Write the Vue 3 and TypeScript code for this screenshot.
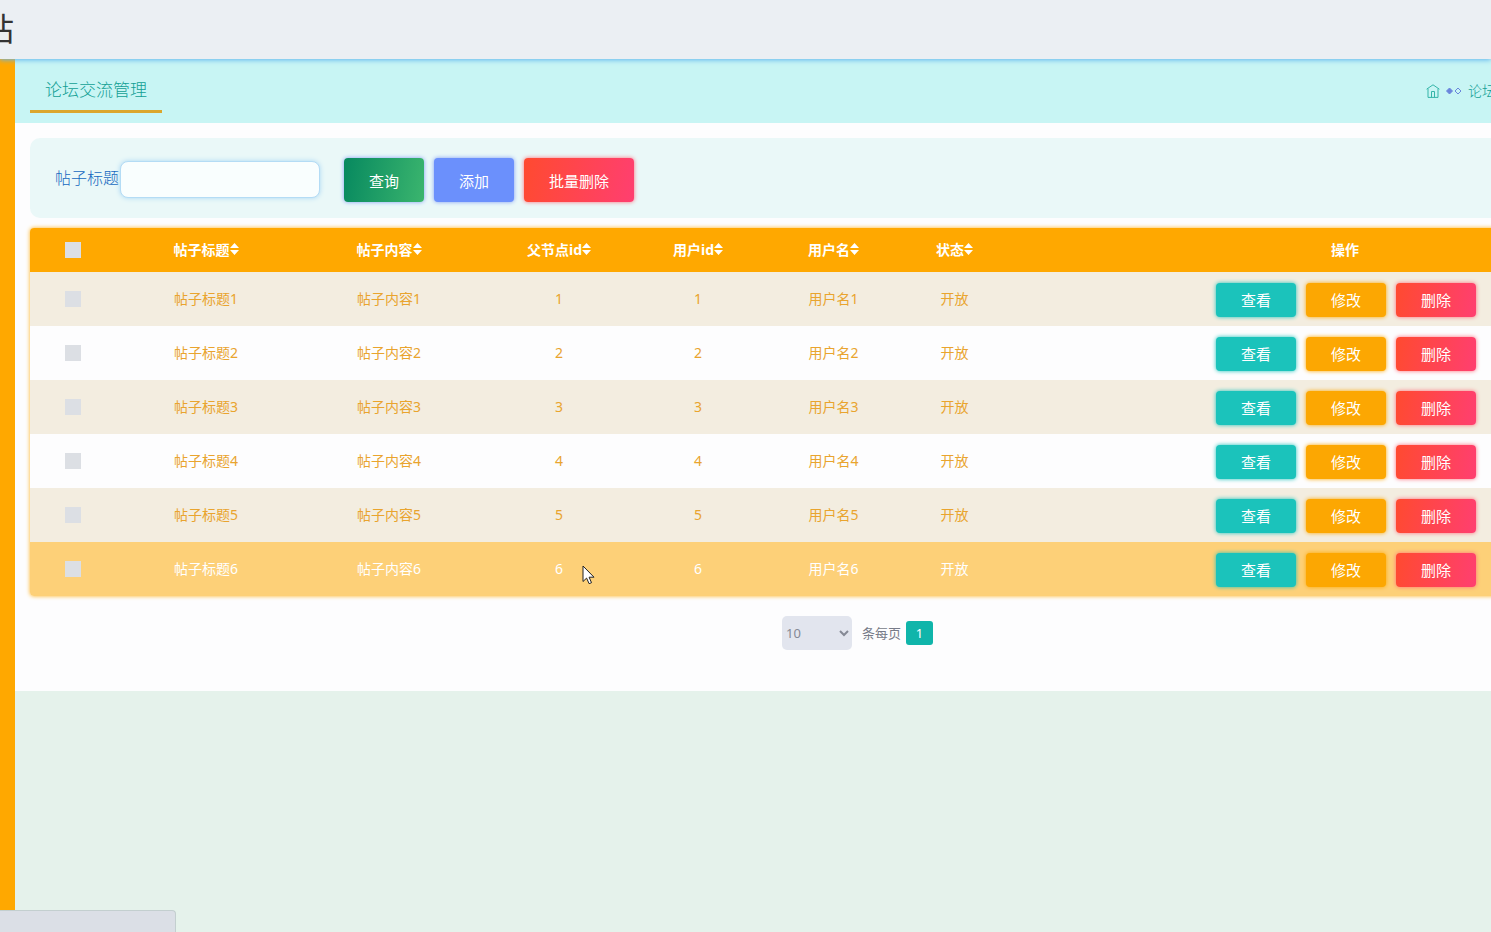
<script setup lang="ts">
import { ref } from 'vue'

interface Post {
  id: number
  title: string
  content: string
  user: string
  state: string
}

const columns: { key: string; label: string }[] = [
  { key: 'title', label: '帖子标题' },
  { key: 'content', label: '帖子内容' },
  { key: 'parent', label: '父节点id' },
  { key: 'uid', label: '用户id' },
  { key: 'user', label: '用户名' },
  { key: 'state', label: '状态' },
]

const posts: Post[] = [1, 2, 3, 4, 5, 6].map((id) => ({
  id,
  title: `帖子标题${id}`,
  content: `帖子内容${id}`,
  user: `用户名${id}`,
  state: '开放',
}))

const keyword = ref('')
const pageSize = ref('10')
const activeId = ref(6)
</script>

<template>
  <div class="shell">
    <header class="topbar"><span class="brand">站</span></header>
    <div class="body">
      <aside class="sidebar"></aside>
      <main class="main">
        <div class="crumbs">
          <h1 class="page-title">论坛交流管理</h1>
          <nav class="trail">
            <a href="#" aria-label="home" class="home">
              <svg width="14" height="14" viewBox="0 0 14 14" fill="none" stroke="currentColor">
                <path d="M.6 5.2 7 .8l6.4 4.4M2 4.6v8.8h10V4.6M5.5 13.4V7.5h3v5.9" />
              </svg>
            </a>
            <svg class="diamonds" width="16" height="8" viewBox="0 0 16 8" stroke="currentColor">
              <path d="M3.5 1 6.5 4 3.5 7 .5 4z" fill="currentColor" />
              <path d="M12 1 15 4 12 7 9 4z" fill="none" />
            </svg>
            <span>论坛</span>
          </nav>
        </div>

        <section class="panel">
          <form class="search" @submit.prevent>
            <label for="keyword">帖子标题</label>
            <input id="keyword" v-model="keyword" type="text" />
            <div class="tools">
              <button type="submit" class="btn query">查询</button>
              <button type="button" class="btn add">添加</button>
              <button type="button" class="btn danger">批量删除</button>
            </div>
          </form>

          <table class="grid">
            <colgroup>
              <col class="c-check" />
              <col v-for="c in columns" :key="c.key" :class="`c-${c.key}`" />
              <col />
            </colgroup>
            <thead>
              <tr>
                <th><input type="checkbox" aria-label="all" /></th>
                <th v-for="c in columns" :key="c.key" class="text">
                  <span class="sortable">{{ c.label }}<svg width="9" height="12" viewBox="0 0 9 12" fill="currentColor"><path d="M4.5 0 9 5H0zM0 7h9l-4.5 5z" /></svg></span>
                </th>
                <th class="text">操作</th>
              </tr>
            </thead>
            <tbody>
              <tr v-for="p in posts" :key="p.id" :class="{ active: p.id === activeId }">
                <td><input type="checkbox" :aria-label="p.title" /></td>
                <td class="text">{{ p.title }}</td>
                <td class="text">{{ p.content }}</td>
                <td class="text">{{ p.id }}</td>
                <td class="text">{{ p.id }}</td>
                <td class="text">{{ p.user }}</td>
                <td class="text">{{ p.state }}</td>
                <td>
                  <div class="actions">
                    <button type="button" class="btn small view">查看</button>
                    <button type="button" class="btn small edit">修改</button>
                    <button type="button" class="btn small danger">删除</button>
                  </div>
                </td>
              </tr>
            </tbody>
          </table>

          <div class="pager">
            <select id="size" v-model="pageSize">
              <option>10</option>
            </select>
            <label for="size">条每页</label>
            <button type="button" class="page">1</button>
          </div>
        </section>
      </main>
    </div>
    <div class="status"></div>
    <svg class="cursor" width="13" height="20" viewBox="0 0 13 20">
      <path d="M1 1v15.5l3.6-3.4 2.5 5.6 2.4-1-2.4-5.5H12z" fill="#fff" stroke="#222" />
    </svg>
  </div>
</template>

<style>
body {
  margin: 0;
}
</style>

<style scoped>
.shell {
  position: relative;
  display: flex;
  flex-direction: column;
  min-height: 100vh;
  overflow: hidden;
  background: #e5f2eb;
  font-family: "Noto Sans", "Noto Sans CJK SC", sans-serif;
  font-size: 14px;
}
.topbar {
  position: relative;
  z-index: 1;
  display: flex;
  align-items: center;
  box-sizing: border-box;
  height: 59px;
  padding-bottom: 6px;
  background: #ebeff3;
  box-shadow: 0 1px 5px #5fb4ee;
}
.brand {
  display: flex;
  justify-content: flex-end;
  width: 14px;
  font-size: 32px;
  color: #333;
}
.body {
  flex: 1;
  display: flex;
}
.sidebar {
  flex: none;
  width: 15px;
  background: #ffa800;
}
/* the workspace runs past the right edge of the window */
.main {
  flex: 1;
  margin-right: -212px;
}
.crumbs {
  display: flex;
  justify-content: space-between;
  align-items: flex-start;
  height: 64px;
  padding: 0 212px 0 15px;
  box-sizing: border-box;
  background: #c8f5f4;
}
.page-title {
  box-sizing: border-box;
  height: 54px;
  margin: 0;
  padding: 0 15px;
  border-bottom: 3px solid #dba62c;
  font-size: 17px;
  font-weight: 300;
  line-height: 62px;
  color: #12a094;
}
.trail {
  display: flex;
  align-items: center;
  gap: 6px;
  width: 65px;
  height: 64px;
  overflow: hidden;
  white-space: nowrap;
  font-weight: 300;
  color: #12a094;
}
.trail svg {
  display: block;
  flex: none;
}
.trail span {
  padding-bottom: 2px;
  font-size: 14px;
}
.home {
  color: #35b5a8;
}
.diamonds {
  color: #6a86dc;
}
.panel {
  padding: 15px 15px 41px;
  background: #fdfdfe;
}
.search {
  display: flex;
  align-items: center;
  height: 80px;
  padding: 0 25px;
  border-radius: 10px;
  background: #eaf8f8;
  font-size: 16px;
  font-weight: 300;
  color: #1568c0;
}
.search label {
  padding-bottom: 2px;
}
.search input {
  box-sizing: border-box;
  width: 200px;
  height: 37px;
  margin: 2px 0 0 1px;
  padding: 0 10px;
  border: 1px solid #b4dcf5;
  border-radius: 8px;
  background: #f9fefe;
  box-shadow: 0 0 5px #a9d6f3;
}
.tools,
.actions {
  display: flex;
  gap: 10px;
}
.tools {
  margin: 4px 0 0 24px;
}
.actions {
  justify-content: center;
  padding: 2px 0 0 2px;
}
.btn {
  height: 44px;
  padding: 0 25px;
  border: 0;
  border-radius: 4px;
  font-family: inherit;
  font-size: 15px;
  color: #fff;
  box-shadow: 0 0 4px #7f9cf5;
}
.small {
  height: 34px;
  padding-bottom: 1px;
}
.query {
  background: linear-gradient(100deg, #07895f, #3bb56e);
}
.add {
  background: #6b90fc;
}
.danger {
  background: linear-gradient(100deg, #ff4a30, #ff3f70);
  box-shadow: 0 0 4px #ff6b78;
}
.view {
  background: #1bc3bb;
  box-shadow: 0 0 4px #1bc3bb;
}
.edit {
  background: #fca702;
  box-shadow: 0 0 4px #fca702;
}
.grid {
  width: 100%;
  margin-top: 10px;
  table-layout: fixed;
  border-collapse: collapse;
  border-radius: 4px;
  overflow: hidden;
  box-shadow: 0 0 4px #ffb21e;
  text-align: center;
}
.c-check {
  width: 86px;
}
.c-title {
  width: 180px;
}
.c-content {
  width: 186px;
}
.c-parent {
  width: 154px;
}
.c-uid {
  width: 124px;
}
.c-user {
  width: 147px;
}
.c-state {
  width: 95px;
}
.grid th,
.grid td {
  padding: 0;
}
.grid .text {
  padding-bottom: 2px;
}
.grid thead tr {
  height: 44px;
  background: #ffa800;
  color: #fff;
}
.grid tbody tr {
  height: 54px;
  color: #e9a42e;
}
.grid tbody tr:nth-child(odd) {
  background: #f3ede0;
}
.grid tbody tr.active {
  background: #fdd078;
  color: #fff;
}
.grid input {
  display: block;
  appearance: none;
  width: 16px;
  height: 16px;
  margin: 0 auto;
  background: #dcdfe4;
}
.sortable {
  display: inline-flex;
  align-items: center;
}
.pager {
  display: flex;
  justify-content: center;
  align-items: center;
  margin-top: 20px;
  padding-right: 3px;
  font-size: 13px;
  color: #777b88;
}
.pager label {
  padding-bottom: 1px;
}
.pager select {
  width: 70px;
  height: 34px;
  margin-right: 10px;
  border: 0;
  border-radius: 5px;
  background: #e2e5ee;
  font-family: inherit;
  font-size: 13px;
  color: #858995;
}
.page {
  width: 27px;
  height: 24px;
  margin-left: 5px;
  padding: 0;
  border: 0;
  border-radius: 3px;
  background: #10b5aa;
  font-family: inherit;
  font-size: 13px;
  color: #fff;
}
.status {
  position: absolute;
  z-index: 2;
  left: 0;
  bottom: 0;
  width: 175px;
  height: 21px;
  border-top: 1px solid #c3cfcf;
  border-right: 1px solid #c3cfcf;
  border-radius: 0 4px 0 0;
  background: #dbdfe6;
}
.cursor {
  position: absolute;
  left: 582px;
  top: 565px;
}
</style>
